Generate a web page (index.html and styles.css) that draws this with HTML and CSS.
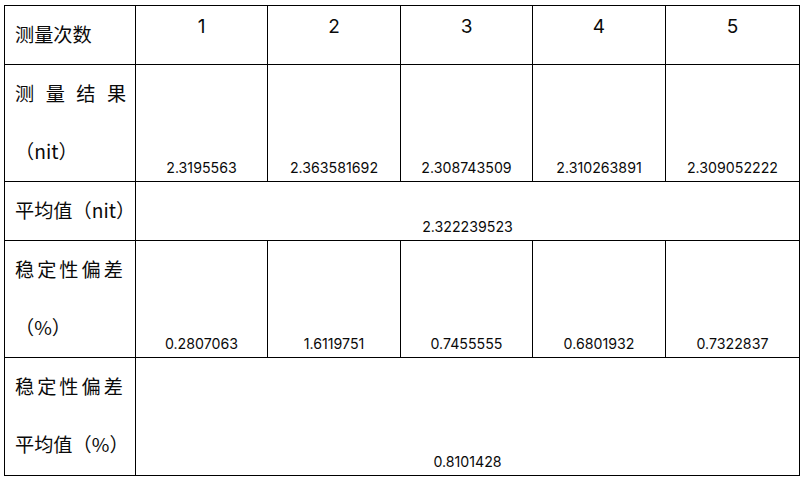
FILE: index.html
```html
<!DOCTYPE html>
<html lang="zh-CN">
<head>
<meta charset="utf-8">
<title>测量结果</title>
<link rel="stylesheet" href="styles.css">
</head>
<body>
<div class="sheet">
  <div class="cell label"><span class="line">测量次数</span></div>
  <div class="cell head">1</div>
  <div class="cell head">2</div>
  <div class="cell head">3</div>
  <div class="cell head">4</div>
  <div class="cell head">5</div>

  <div class="cell label"><span class="line spaced">测量结<span class="last">果</span></span><span class="line">（nit）</span></div>
  <div class="cell value">2.3195563</div>
  <div class="cell value">2.363581692</div>
  <div class="cell value">2.308743509</div>
  <div class="cell value">2.310263891</div>
  <div class="cell value">2.309052222</div>

  <div class="cell label"><span class="line">平均值（nit）</span></div>
  <div class="cell value span5">2.322239523</div>

  <div class="cell label"><span class="line wide">稳定性偏<span class="last">差</span></span><span class="line">（%）</span></div>
  <div class="cell value">0.2807063</div>
  <div class="cell value">1.6119751</div>
  <div class="cell value">0.7455555</div>
  <div class="cell value">0.6801932</div>
  <div class="cell value">0.7322837</div>

  <div class="cell label"><span class="line wide">稳定性偏<span class="last">差</span></span><span class="line">平均值（%）</span></div>
  <div class="cell value span5">0.8101428</div>
</div>
</body>
</html>
```

FILE: styles.css
```css
html, body {
  margin: 0;
  padding: 0;
  background: #ffffff;
}

.sheet {
  margin: 5px 0 0 4px;
  width: 796px;
  box-sizing: border-box;
  display: grid;
  grid-template-columns: 130px 131px 132px 131px 132px 133px;
  grid-template-rows: 58px 116px 58px 116px 117px;
  gap: 1px;
  padding: 1px;
  background: #000000;
}

.cell {
  background: #ffffff;
  color: #0a0a0a;
  display: flex;
  flex-direction: column;
}

.label {
  padding-left: 10px;
  font-family: "Noto Sans CJK SC", "Noto Sans", sans-serif;
  font-size: 19.2px;
}

.line {
  display: block;
  height: 58px;
  line-height: 56px;
  white-space: nowrap;
}

.spaced {
  letter-spacing: 11.5px;
}

.wide {
  letter-spacing: 3px;
}

.last {
  letter-spacing: 0;
}

.head {
  align-items: center;
  font-family: "Inter", "Liberation Sans", sans-serif;
  font-size: 19px;
  line-height: 24px;
  padding-top: 9px;
}

.value {
  align-items: center;
  justify-content: flex-end;
  font-family: "Inter", "Liberation Sans", sans-serif;
  font-size: 14.2px;
  line-height: 20px;
  padding-bottom: 3px;
}

.span5 {
  grid-column: span 5;
}
```
